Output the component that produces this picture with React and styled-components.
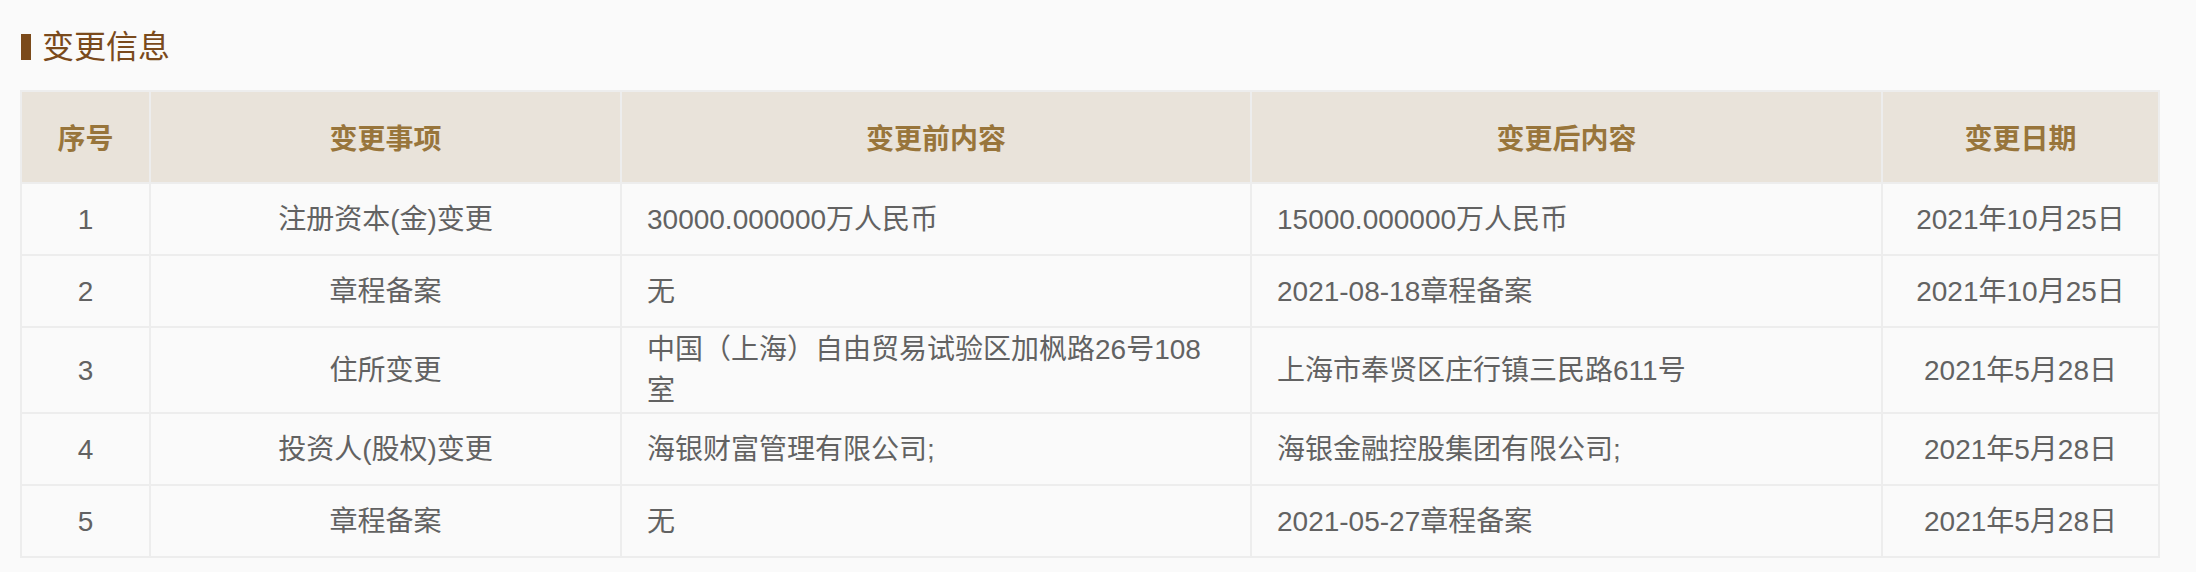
import React from 'react';
import styled, { createGlobalStyle } from 'styled-components';

const GlobalStyle = createGlobalStyle`
  * {
    box-sizing: border-box;
  }
  body {
    margin: 0;
    background: #fafafa;
    font-family: "Liberation Sans", "Noto Sans CJK SC", sans-serif;
  }
`;

const columns = [
  { key: 'no', title: '序号', width: 129, align: 'center' },
  { key: 'item', title: '变更事项', width: 471, align: 'center' },
  { key: 'before', title: '变更前内容', width: 630, align: 'left' },
  { key: 'after', title: '变更后内容', width: 631, align: 'left' },
  { key: 'date', title: '变更日期', width: 277, align: 'center' },
];

const rows = [
  { no: 1, item: '注册资本(金)变更', before: '30000.000000万人民币', after: '15000.000000万人民币', date: '2021年10月25日' },
  { no: 2, item: '章程备案', before: '无', after: '2021-08-18章程备案', date: '2021年10月25日' },
  { no: 3, item: '住所变更', before: '中国（上海）自由贸易试验区加枫路26号108室', after: '上海市奉贤区庄行镇三民路611号', date: '2021年5月28日' },
  { no: 4, item: '投资人(股权)变更', before: '海银财富管理有限公司;', after: '海银金融控股集团有限公司;', date: '2021年5月28日' },
  { no: 5, item: '章程备案', before: '无', after: '2021-05-27章程备案', date: '2021年5月28日' },
];

const App = () => {
  return (
    <Page>
      <GlobalStyle />
      <SectionTitle>
        <TitleBar />
        变更信息
      </SectionTitle>
      <Table>
        <colgroup>
          {columns.map((col) => (
            <col key={col.key} style={{ width: col.width }} />
          ))}
        </colgroup>
        <thead>
          <tr>
            {columns.map((col) => (
              <HeadCell key={col.key}>{col.title}</HeadCell>
            ))}
          </tr>
        </thead>
        <tbody>
          {rows.map((row) => (
            <tr key={row.no}>
              {columns.map((col) => (
                <Cell key={col.key} $align={col.align}>
                  {row[col.key]}
                </Cell>
              ))}
            </tr>
          ))}
        </tbody>
      </Table>
    </Page>
  );
};

export default App;

const Page = styled.div`
  padding: 27px 38px 0 20px;
`;

const SectionTitle = styled.h2`
  display: flex;
  align-items: center;
  margin: 0;
  height: 40px;
  font-size: 32px;
  font-weight: normal;
  line-height: 40px;
  color: #7a4a1c;
`;

const TitleBar = styled.span`
  display: inline-block;
  width: 10px;
  height: 26px;
  margin: 0 11px 0 1px;
  background-color: #7b4a1a;
`;

const Table = styled.table`
  width: 2138px;
  margin-top: 23px;
  border-collapse: collapse;
  table-layout: fixed;
  font-size: 28px;
`;

const HeadCell = styled.th`
  height: 92px;
  padding: 0 10px;
  border: 2px solid #ededed;
  background-color: #e9e3da;
  color: #98753b;
  font-weight: bold;
  text-align: center;
  vertical-align: middle;
`;

const Cell = styled.td`
  height: 72px;
  padding: 1px ${(props) => (props.$align === 'left' ? '40px 1px 25px' : '10px')};
  border: 2px solid #ededed;
  background-color: #fafafa;
  color: #626262;
  line-height: 41px;
  text-align: ${(props) => props.$align};
  vertical-align: middle;
`;
